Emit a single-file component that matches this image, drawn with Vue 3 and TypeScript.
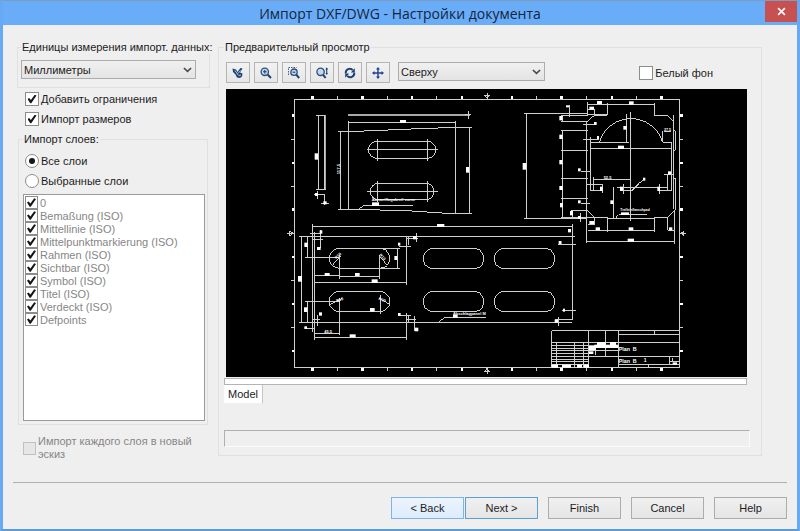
<script setup lang="ts">
import { ref } from 'vue'

type Box = [number, number, number, number]

interface Layer {
  name: string
  on: boolean
}

const units = ref('Миллиметры')
const view = ref('Сверху')
const addConstraints = ref(true)
const importDims = ref(true)
const layerMode = ref('all')
const whiteBg = ref(false)
const layers = ref<Layer[]>(
  [
    '0',
    'Bemaßung (ISO)',
    'Mittellinie (ISO)',
    'Mittelpunktmarkierung (ISO)',
    'Rahmen (ISO)',
    'Sichtbar (ISO)',
    'Symbol (ISO)',
    'Titel (ISO)',
    'Verdeckt (ISO)',
    'Defpoints',
  ].map((name) => ({ name, on: true })),
)

// Sheet frame marks: bold zone marks and thin half-zone ticks
const markX = [937, 1087, 1236, 1386, 1536, 1685, 1836, 1985]
const tickX = [1011, 1162, 1310, 1610, 1760, 1910]
const markY = [347, 489, 629, 771, 912, 1053]
const tickY = [418, 559, 700, 841, 983]

// Dimension values, shown as solid blocks at this zoom level
const plateBoxes: Box[] = [
  [345, 90, 18, 9], [89, 190, 10, 19], [543, 231, 9, 17], [261, 337, 21, 11], [456, 402, 22, 9], [90, 309, 9, 9], [115, 334, 10, 9],
]
const flangeBoxes: Box[] = [
  [351, 33, 15, 9], [447, 34, 14, 10], [328, 50, 14, 9], [258, 46, 9, 6], [238, 78, 9, 13], [342, 96, 8, 9],
  [238, 134, 10, 13], [430, 108, 10, 11], [351, 138, 6, 9], [414, 167, 18, 10], [128, 219, 11, 20], [238, 210, 9, 13],
  [294, 235, 8, 9], [564, 244, 9, 9], [238, 288, 10, 12], [294, 331, 8, 9], [360, 290, 8, 13], [420, 290, 9, 13],
  [532, 290, 8, 13], [391, 331, 9, 11], [240, 339, 9, 13], [270, 363, 9, 13], [294, 378, 8, 9], [328, 393, 14, 9],
  [347, 412, 13, 9], [446, 412, 14, 9], [567, 412, 10, 9], [443, 446, 19, 9], [264, 417, 9, 10], [237, 454, 7, 9],
  [489, 263, 7, 9], [423, 367, 24, 8],
]
const panelBoxes: Box[] = [
  [104, 46, 8, 10], [58, 83, 10, 13], [96, 96, 11, 9], [39, 183, 12, 17], [119, 174, 15, 9], [210, 174, 14, 9],
  [260, 193, 18, 11], [328, 123, 9, 12], [339, 83, 7, 9], [384, 64, 11, 9], [57, 277, 10, 14], [255, 279, 14, 11],
  [102, 292, 9, 10], [339, 294, 8, 9], [58, 334, 8, 8], [390, 338, 10, 11], [194, 358, 18, 9], [504, 299, 14, 9],
]
const titleBoxes: Box[] = [
  [215, 404, 19, 9], [246, 404, 27, 9], [291, 404, 15, 9], [312, 404, 15, 9], [351, 336, 26, 9], [390, 336, 18, 9],
  [343, 344, 72, 10], [327, 346, 20, 15], [327, 364, 13, 8], [236, 33, 8, 9], [249, 236, 6, 9], [224, 269, 10, 9], [578, 397, 13, 7],
]

const slots: [number, number][] = [[415, 100], [415, 229], [628, 100], [628, 229]]
</script>

<template>
  <div class="window">
    <header class="titlebar">
      <h1>Импорт DXF/DWG - Настройки документа</h1>
      <button class="close" type="button" aria-label="Close">
        <svg viewBox="0 0 10 10" aria-hidden="true"><path d="M1.2 1.2 8.8 8.8M8.8 1.2 1.2 8.8" /></svg>
      </button>
    </header>

    <main class="content">
      <section class="options">
        <fieldset class="group units">
          <legend>Единицы измерения импорт. данных:</legend>
          <div class="drop">
            <select v-model="units" aria-label="Единицы измерения">
              <option>Миллиметры</option>
              <option>Дюймы</option>
            </select>
            <svg viewBox="0 0 10 6" aria-hidden="true"><path d="M1 .8 5 4.6 9 .8" /></svg>
          </div>
        </fieldset>

        <div class="checks">
          <label class="choice"><input v-model="addConstraints" type="checkbox" />Добавить ограничения</label>
          <label class="choice"><input v-model="importDims" type="checkbox" />Импорт размеров</label>
        </div>

        <fieldset class="group layers">
          <legend>Импорт слоев:</legend>
          <div class="radios">
            <label class="choice"><input v-model="layerMode" type="radio" name="layers" value="all" />Все слои</label>
            <label class="choice"><input v-model="layerMode" type="radio" name="layers" value="selected" />Выбранные слои</label>
          </div>
          <ul class="list">
            <li v-for="layer in layers" :key="layer.name">
              <label class="layer"><input v-model="layer.on" type="checkbox" disabled />{{ layer.name }}</label>
            </li>
          </ul>
        </fieldset>

        <label class="sketch"><input type="checkbox" disabled /><span>Импорт каждого слоя в новый эскиз</span></label>
      </section>

      <fieldset class="group preview">
        <legend>Предварительный просмотр</legend>
        <div class="toolbar">
          <button class="tool" type="button" aria-label="Select">
            <svg viewBox="0 0 12 12">
              <path class="fill" d="M.5 1.5 4 2.5 5.5 5 8.5 1 10.5 1.5 8 5.5 10.5 6.5 10 9.5 8 11 5 10.5 3.5 7.5 1 5Z" />
              <path class="shine" d="M3 3.5 6.5 8.5M6 6.5 8.5 3.5M7 8.5 9 8" />
            </svg>
          </button>
          <button class="tool" type="button" aria-label="Zoom">
            <svg viewBox="0 0 12 12">
              <circle class="lens" cx="4.8" cy="4.8" r="3.7" />
              <path class="thin" d="M3 4.8h3.6M4.8 3v3.6" />
              <path class="handle" d="M7.8 7.8 11 11" />
            </svg>
          </button>
          <button class="tool" type="button" aria-label="Zoom window">
            <svg viewBox="0 0 12 12">
              <path class="dash" d="M.5 8V.5h8" />
              <circle class="lens" cx="6" cy="5.2" r="3.2" />
              <path class="thin" d="M4.6 5.2h2.8" />
              <path class="handle" d="M8.4 7.8 11.2 11" />
            </svg>
          </button>
          <button class="tool" type="button" aria-label="Zoom in and out">
            <svg viewBox="0 0 12 12">
              <circle class="lens" cx="4.6" cy="4.8" r="3.7" />
              <path class="handle" d="M7.2 7.8 9.6 11" />
              <path class="thin" d="M10.7 1v6" />
              <path class="fill" d="M9.4 2.4 10.7.3 12 2.4ZM9.4 6 10.7 8.1 12 6Z" />
            </svg>
          </button>
          <button class="tool" type="button" aria-label="Rotate">
            <svg viewBox="0 0 12 12">
              <path class="handle" d="M1.8 6.3A4 4 0 0 1 8.8 3.2M10.2 5.7A4 4 0 0 1 3.2 8.8" />
              <path class="fill" d="M10.8 1.2v4.3H6.8ZM1.2 10.8V6.5h4Z" />
            </svg>
          </button>
          <button class="tool" type="button" aria-label="Pan">
            <svg viewBox="0 0 12 12">
              <path class="bright" d="M6 1v10M1 6h10" />
              <path class="brightfill" d="M6 0 8 2.5H4ZM6 12 4 9.5h4ZM0 6 2.5 4v4ZM12 6 9.5 8V4Z" />
            </svg>
          </button>
          <div class="drop views">
            <select v-model="view" aria-label="Вид">
              <option>Сверху</option>
              <option>Спереди</option>
            </select>
            <svg viewBox="0 0 10 6" aria-hidden="true"><path d="M1 .8 5 4.6 9 .8" /></svg>
          </div>
          <label class="choice white"><input v-model="whiteBg" type="checkbox" />Белый фон</label>
        </div>

        <svg class="drawing" viewBox="678 267 1563 865" role="img" aria-label="Model">
          <rect x="678" y="267" width="1563" height="865" fill="#000" />

          <!-- sheet frame -->
          <rect class="line" x="882" y="298" width="1157" height="804" />
          <path v-for="x in markX" :key="'mx' + x" class="bold" :d="`M${x} 287v10M${x} 1104v9`" />
          <path v-for="x in tickX" :key="'tx' + x" class="line" :d="`M${x} 289v8M${x} 1104v8`" />
          <path v-for="y in markY" :key="'my' + y" class="bold" :d="`M875 ${y}h7M2039 ${y}h9`" />
          <path v-for="y in tickY" :key="'ty' + y" class="line" :d="`M874 ${y}h8M2039 ${y}h9`" />
          <path class="line" d="M1461 278v20M1453 286h16l-8 9zM1461 1103v19M1454 1115h14l-7-10zM862 700h20M869 693v14l10-7zM2039 700h20M2052 693v14l-10-7z" />

          <!-- cover plate and its side views -->
          <g transform="translate(855 270)">
            <path class="line" d="M93 76H122M99 76V299M119 76V298M92 298H122M88 313H119V344M98 304V326M108 340H131" />
            <path class="line dim" d="M190 73H555M190 77H555M122 76V298" />
            <path class="line" d="M550 64V88M541 75H558M190 93V360M512 93V370M190 99H512M159 124H215L380 117 485 113H561M553 113V371M166 124V359M158 358H220L380 363 485 370H561" />
            <path class="line" d="M276 154H427A25 25 0 0 1 427 205H276A25 25 0 0 1 276 154ZM276 280H427A25 25 0 0 1 427 329H276A25 25 0 0 1 276 280ZM276 147V212M427 147V212M246 178H459M276 273V335M427 273V335M246 306H459M219 359 238 346H383" />
            <path class="line" d="M82 409H780M82 403V418" />
            <rect v-for="(b, i) in plateBoxes" :key="i" class="box" :x="b[0]" :y="b[1]" :width="b[2]" :height="b[3]" />
            <text x="260" y="334" font-size="12">Abzweilfogabreil vorne</text>
            <text transform="translate(165 253) rotate(-90)" font-size="13">117,5</text>
          </g>

          <!-- flange plate -->
          <g transform="translate(1440 270)">
            <path class="line" d="M131 71H323M139 71V385M133 385H320M323 36V76M323 43H523M382 38V76H343M523 38V76M323 74H382M523 76H563L580 95V120L586 122V181H580V265H586V360L563 382V420M343 58V76L320 96V460M323 58H343" />
            <path class="line" d="M320 96V360L343 382V405M323 382H382V425M382 385H523V425M523 382H563M323 405H343M323 422H523M563 422H586M320 456H586M584 360V463M580 76V358" />
            <path class="line" d="M268 44V82M244 76H323M244 94H320M248 76V94M242 121H323M242 181H323M248 121V181M242 265H323M248 181V382M242 325H323M244 382H320M272 361H320M277 361V382M303 370V395M290 382H380" />
            <path class="line" d="M451 65V392M439 71V157M331 157H446M331 141V302M331 175H574M574 156V302M548 157H574M548 122V157M552 124H572M358 157A99 99 0 0 1 548 157M340 268H450M340 261V302M331 302H368M368 285V310M412 292H563M430 282V312M430 302H458M453 303 488 270M458 300 478 280M539 282V312M539 302H574M563 251V302M553 253H583M400 292V385M407 384 416 374H502M309 104H345M309 148H357M303 244H332M322 284H370M303 340H330" />
            <path class="line" d="M0 409H277M0 439H285M277 402V463M235 463H288" />
            <rect v-for="(b, i) in flangeBoxes" :key="i" class="box" :x="b[0]" :y="b[1]" :width="b[2]" :height="b[3]" />
            <text x="371" y="266" font-size="12">52,5</text>
            <text x="552" y="123" font-size="11">27,5</text>
            <text x="421" y="363" font-size="10">Trefleinflanschpad</text>
          </g>

          <!-- front panel -->
          <g transform="translate(855 645)">
            <path class="line" d="M82 27V350M88 50V376M42 64H862M50 64V322M42 322H862M75 55H108M82 73H113M107 45V98M67 64V128M60 129H164M67 259V322M60 259H164" />
            <path class="line" d="M163 100H284A30 30 0 0 1 284 160H163A30 30 0 0 1 163 100ZM163 229H284A30 30 0 0 1 284 290H163A30 30 0 0 1 163 229ZM164 120V192M284 120V192M164 249V360M286 240V296M284 100H345M284 160H345M338 100V160M88 181H164M164 184H284M88 202H364M364 64V209M343 94H378M369 64V90M364 71H400M395 54V80M142 151 168 122M305 149 284 124M132 270 172 250M311 266 282 250" />
            <path class="line" d="M364 295V376M88 367H364M88 355H164M346 303H378M369 303V320M364 314H392M388 304V347M82 314H105M97 301V334M60 342H90M462 321 477 309H604" />
            <rect
              v-for="(s, i) in slots"
              :key="'s' + i"
              class="line"
              :x="s[0]"
              :y="s[1]"
              width="181"
              height="61"
              rx="30"
            />
            <rect v-for="(b, i) in panelBoxes" :key="i" class="box" :x="b[0]" :y="b[1]" :width="b[2]" :height="b[3]" />
            <text x="118" y="354" font-size="12">45,5</text>
            <text x="504" y="299" font-size="12">Abschlagpanel M</text>
            <text transform="translate(154 133) rotate(-45)" font-size="12">R10</text>
            <text transform="translate(282 121) rotate(45)" font-size="12">R10</text>
            <text transform="translate(155 262) rotate(-20)" font-size="12">R10</text>
            <text transform="translate(280 254) rotate(20)" font-size="12">R10</text>
          </g>

          <!-- title block -->
          <g transform="translate(1440 690)">
            <path class="line" d="M278 0V271M236 43H286M247 243H287M225 270H275M235 260V287" />
            <path class="line" d="M215 411V303H599M327 303V411M377 303V379M416 303V411M416 314H599M524 303V314M215 338H599M416 379H599M327 379H416M416 404H599M568 379V404M230 338V411M284 338V411M311 338V411M347 345V374M507 404V411" />
            <path class="line" d="M215 347H327M215 355H327M215 363H327M215 371H327M215 380H327M215 388H327M215 396H327M215 403H327M327 362H416M568 394H599M578 384V392" />
            <rect v-for="(b, i) in titleBoxes" :key="i" class="box" :x="b[0]" :y="b[1]" :width="b[2]" :height="b[3]" />
            <text x="416" y="364" font-size="16">Plan&#160; B</text>
            <text x="416" y="398" font-size="16">Plan&#160; B</text>
            <text x="491" y="397" font-size="15">1</text>
          </g>
        </svg>

        <div class="strip"></div>
        <button class="tab" type="button">Model</button>
        <div class="status" role="status"></div>
      </fieldset>
    </main>

    <footer class="actions">
      <div class="pair">
        <button class="btn hot" type="button">&lt; Back</button>
        <button class="btn default" type="button">Next &gt;</button>
      </div>
      <button class="btn" type="button">Finish</button>
      <button class="btn" type="button">Cancel</button>
      <button class="btn" type="button">Help</button>
    </footer>
  </div>
</template>

<style>
body {
  margin: 0;
  background: #efefef;
}
</style>

<style scoped>
.window {
  box-sizing: border-box;
  display: flex;
  flex-direction: column;
  min-height: 100vh;
  border: 3px solid #67a9f2;
  border-top: 1px solid #7d9cc0;
  border-bottom: 2px solid #5d9ad6;
  background: #efefef;
  color: #1c1c1c;
  font: 11px/14px 'Liberation Sans', Arial, sans-serif;
}

button,
select {
  font: inherit;
  color: inherit;
  border-radius: 0;
}

.titlebar {
  display: grid;
  grid-template-columns: 32px 1fr 32px;
  align-items: start;
  height: 24px;
  background: #69adf8;
}

h1 {
  grid-column: 2;
  margin: 0;
  text-align: center;
  font: 14px/26px 'Open Sans', 'Noto Sans', sans-serif;
  color: #14243c;
}

.close {
  display: grid;
  place-items: center;
  height: 21px;
  padding: 0;
  border: 0;
  background: #c75050;
}

.close svg {
  width: 9px;
  height: 9px;
  stroke: #fff;
  stroke-width: 1.8;
}

.content {
  flex: 1;
  display: grid;
  grid-template-columns: 193px 1fr;
  align-items: start;
  gap: 8px;
  padding: 15px 35px 0 14px;
}

.group {
  min-width: 0;
  margin: 0;
  padding: 0;
  border: 1px solid #e0e0e0;
}

.group legend {
  padding: 0 1px;
  white-space: nowrap;
}

.units {
  padding: 6px 13px 8px 3px;
}

.drop {
  display: grid;
  align-items: center;
}

.drop > * {
  grid-area: 1 / 1;
}

.drop select {
  appearance: none;
  width: 100%;
  height: 19px;
  padding: 0 20px 0 2px;
  border: 1px solid #acacac;
  background: linear-gradient(#f0f0f0, #e4e4e4);
}

.drop svg {
  justify-self: end;
  width: 9px;
  height: 6px;
  margin-right: 4px;
  fill: none;
  stroke: #4a4a4a;
  stroke-width: 1.8;
  pointer-events: none;
}

.checks,
.radios {
  display: flex;
  flex-direction: column;
  gap: 6px;
}

.checks {
  padding: 4px 8px 6px;
}

.choice,
.layer,
.sketch {
  display: flex;
  align-items: center;
  gap: 2px;
}

input {
  appearance: none;
  flex: none;
  display: grid;
  place-items: center;
  box-sizing: border-box;
  width: 14px;
  height: 14px;
  margin: 0;
  border: 1px solid #8c8c8c;
  background: #fff;
}

input[type='checkbox']:checked::before {
  content: '';
  width: 9px;
  height: 9px;
  background: #161616;
  clip-path: polygon(0 50%, 18% 38%, 38% 62%, 80% 2%, 100% 12%, 42% 98%, 30% 98%);
}

input[type='radio'] {
  border-radius: 50%;
}

input[type='radio']:checked::before {
  content: '';
  width: 6px;
  height: 6px;
  border-radius: 50%;
  background: #161616;
}

.layers {
  margin: 0 2px 0 1px;
  padding: 8px 2px 3px 4px;
}

.radios {
  padding: 0 2px;
}

.list {
  box-sizing: border-box;
  height: 227px;
  margin: 6px 0 0;
  padding: 1px;
  border: 1px solid #9a9a9a;
  background: #fff;
  list-style: none;
  overflow: auto;
}

.layer {
  height: 13px;
  color: #868686;
}

.layer input,
.sketch input {
  width: 13px;
  height: 13px;
}

.sketch {
  margin: 10px 6px 0;
  line-height: 13px;
  color: #868686;
}

.sketch input {
  border-color: #c0c0c0;
  background: #e6e6e6;
}

.preview {
  padding: 8px 11px 8px 5px;
}

.toolbar {
  display: flex;
  align-items: flex-start;
  gap: 4px;
  margin: 0 3px 6px 2px;
}

.tool {
  display: grid;
  place-items: center;
  width: 24px;
  height: 21px;
  padding: 0;
  border: 1px solid #b4b4b4;
  background: linear-gradient(#f2f2f2, #e6e6e6);
}

.tool svg {
  width: 12px;
  height: 12px;
  fill: none;
  stroke: none;
}

.tool .fill {
  fill: #1d4273;
}

.tool .shine {
  stroke: #a8cfe6;
  stroke-width: 1;
}

.tool .lens {
  fill: #c3d8ea;
  stroke: #2f4f7c;
  stroke-width: 1.3;
}

.tool .thin {
  stroke: #1d4273;
  stroke-width: 1.1;
}

.tool .dash {
  stroke: #4c5d75;
  stroke-dasharray: 1.5 1;
}

.tool .handle {
  stroke: #1d4273;
  stroke-width: 2;
}

.tool .bright {
  stroke: #21409a;
  stroke-width: 1.4;
}

.tool .brightfill {
  fill: #21409a;
}

.views {
  width: 147px;
  margin-left: 4px;
}

.white {
  margin: 4px 34px 0 auto;
}

.drawing {
  display: block;
  width: calc(100% - 5px);
  margin-left: 2px;
}

.drawing .line {
  fill: none;
  stroke: #cfcfcf;
  stroke-width: 3;
  shape-rendering: crispEdges;
}

.drawing .dim {
  stroke: #a8a8a8;
}

.drawing .bold {
  stroke: #fff;
  stroke-width: 8;
  shape-rendering: crispEdges;
}

.drawing .box {
  fill: #fff;
}

.drawing text {
  fill: #fff;
  font-family: 'Liberation Sans', Arial, sans-serif;
  font-weight: bold;
}

.strip {
  height: 5px;
  margin: 1px 3px 0 0;
  border: 1px solid #b4b4b4;
  background: #fff;
}

.tab {
  display: block;
  height: 18px;
  padding: 0 4px;
  border: 0;
  border-right: 1px solid #c4c4c4;
  background: #fff;
}

.status {
  height: 15px;
  margin-top: 27px;
  border: 1px solid #b0b0b0;
  border-right-color: #fafafa;
  border-bottom-color: #fafafa;
}

.actions {
  display: flex;
  justify-content: flex-end;
  gap: 10px;
  margin: 0 10px;
  padding: 14px 0 10px;
  border-top: 1px solid #b0b0b0;
}

.pair {
  display: flex;
  gap: 1px;
}

.btn {
  width: 73px;
  height: 22px;
  padding: 0;
  border: 1px solid #acacac;
  background: linear-gradient(#f0f0f0, #e5e5e5);
}

.btn.hot {
  border-color: #7eb4ea;
  background: linear-gradient(#ecf4fc, #dcecfc);
}

.btn.default {
  border-color: #5a9fd8;
}
</style>
